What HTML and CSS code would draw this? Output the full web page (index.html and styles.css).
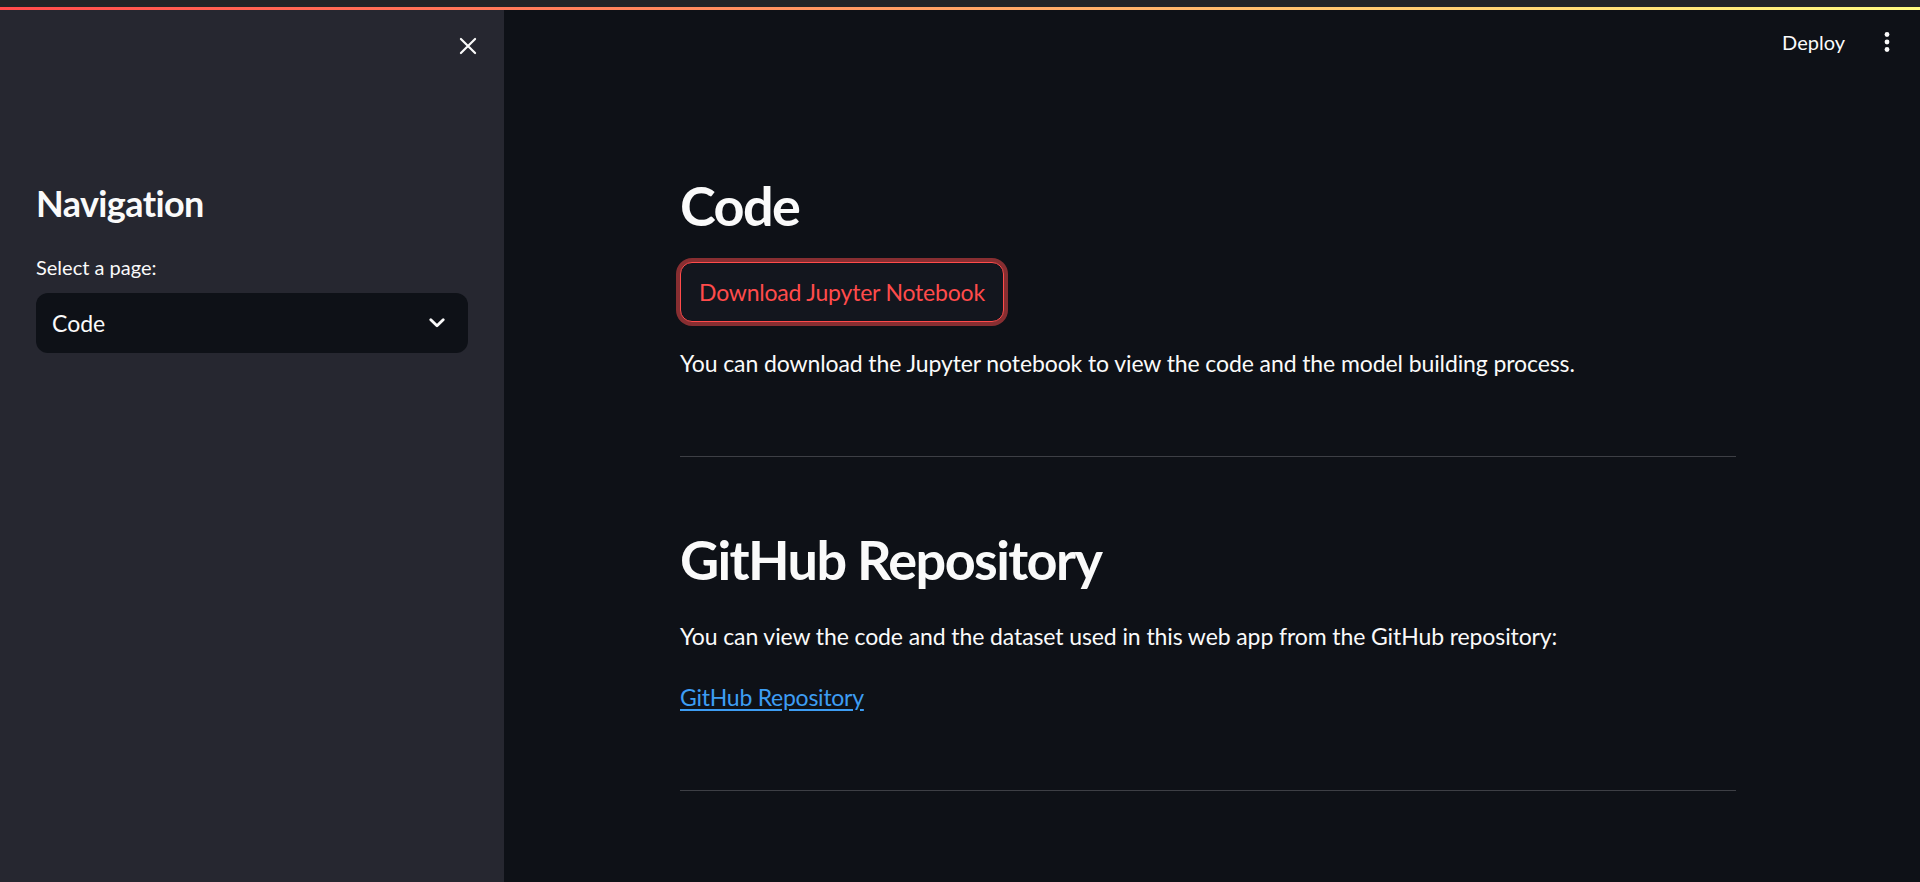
FILE: index.html
```html
<!DOCTYPE html>
<html lang="en">
<head>
<meta charset="utf-8">
<title>Code</title>
<link rel="stylesheet" href="styles.css">
</head>
<body>
<div class="chrome"></div>
<div class="decoration"></div>
<div class="app">
  <aside class="sidebar">
    <div class="sidebar-header">
      <button class="close-btn" aria-label="Close sidebar">
        <svg width="24" height="24" viewBox="0 0 24 24"><path d="M3.5 3.5 L20.5 20.5 M20.5 3.5 L3.5 20.5" stroke="#fafafa" stroke-width="2.6" stroke-linecap="round" fill="none"/></svg>
      </button>
    </div>
    <div class="sidebar-body">
      <h2 class="side-title">Navigation</h2>
      <label class="side-label">Select a page:</label>
      <div class="select">
        <span class="select-value">Code</span>
        <svg class="chev" width="16" height="10" viewBox="0 0 16 10"><path d="M1.8 1.8 L8 7.8 L14.2 1.8" stroke="#fafafa" stroke-width="2.8" stroke-linecap="round" stroke-linejoin="round" fill="none"/></svg>
      </div>
    </div>
  </aside>
  <main class="main">
    <header class="topbar">
      <span class="deploy">Deploy</span>
      <svg class="kebab" width="24" height="24" viewBox="0 0 24 24"><circle cx="12" cy="4.5" r="2.4" fill="#fafafa"/><circle cx="12" cy="12" r="2.4" fill="#fafafa"/><circle cx="12" cy="19.5" r="2.4" fill="#fafafa"/></svg>
    </header>
    <div class="block">
      <h2 class="h2 first">Code</h2>
      <button class="dl-btn">Download Jupyter Notebook</button>
      <p class="para p1">You can download the Jupyter notebook to view the code and the model building process.</p>
      <hr class="rule r1">
      <h2 class="h2 second">GitHub Repository</h2>
      <p class="para p2">You can view the code and the dataset used in this web app from the GitHub repository:</p>
      <p class="para p3"><a class="link" href="#">GitHub Repository</a></p>
      <hr class="rule r2">
    </div>
  </main>
</div>
</body>
</html>
```
FILE: styles.css
```css
* { box-sizing: border-box; }
html, body {
  margin: 0;
  padding: 0;
  height: 882px;
  overflow: hidden;
  background: #0e1117;
  font-family: Lato, "Noto Sans", sans-serif;
  color: #fafafa;
}
.chrome {
  height: 7px;
  background: #202427;
}
.decoration {
  height: 3px;
  background: linear-gradient(90deg, #ff4b4b, #fffd80);
}
.app {
  display: flex;
  height: 872px;
}
.sidebar {
  width: 504px;
  flex: 0 0 504px;
  background: #262730;
}
.sidebar-header {
  display: flex;
  justify-content: flex-end;
  padding: 18px 18px 0 0;
}
.close-btn {
  width: 36px;
  height: 36px;
  padding: 0;
  border: 0;
  background: transparent;
  display: flex;
  align-items: center;
  justify-content: center;
}
.close-btn svg { width: 20px; height: 20px; }
.sidebar-body {
  padding: 0 36px;
}
.side-title {
  margin: 118px 0 0;
  font-size: 36px;
  line-height: 1.2;
  font-weight: 700;
  letter-spacing: -0.6px;
}
.side-label {
  display: block;
  margin-top: 27px;
  font-size: 20px;
  line-height: 31.5px;
}
.select {
  margin-top: 9px;
  height: 60px;
  border-radius: 12px;
  background: #0e1117;
  display: flex;
  align-items: center;
  justify-content: space-between;
  padding: 0 23px 0 16px;
}
.select-value {
  font-size: 23px;
}
.main {
  flex: 1;
  display: flex;
  flex-direction: column;
  padding-right: 8px;
}
.topbar {
  height: 64px;
  display: flex;
  align-items: center;
  justify-content: flex-end;
  gap: 30px;
  padding-right: 13px;
}
.deploy {
  font-size: 20px;
  line-height: 24px;
}
.block {
  width: 1056px;
  margin: 0 auto;
  padding-top: 100px;
}
.h2 {
  margin: 0;
  font-size: 54px;
  line-height: 1.2;
  font-weight: 700;
  letter-spacing: -1.6px;
}
.dl-btn {
  display: block;
  margin-top: 23px;
  height: 60px;
  padding: 0 18px;
  border: 1.5px solid #ff4b4b;
  border-radius: 12px;
  background: #13161e;
  box-shadow: 0 0 0 4px rgba(255, 75, 75, 0.5);
  color: #ff4b4b;
  font-family: Lato, "Noto Sans", sans-serif;
  font-size: 23px;
  letter-spacing: -0.2px;
}
.para {
  margin: 0;
  font-size: 23px;
  line-height: 36.8px;
  letter-spacing: -0.1px;
}
.p1 { margin-top: 23px; }
.rule {
  margin: 0;
  border: 0;
  height: 1px;
  background: #3d3f45;
}
.r1 { margin-top: 74px; }
.second { margin-top: 71px; }
.p2 { margin-top: 26px; }
.p3 { margin-top: 24px; }
.r2 { margin-top: 74px; }
.link {
  color: #3d9df3;
  text-decoration: underline;
  text-underline-offset: 3px;
  letter-spacing: -0.25px;
}
```
